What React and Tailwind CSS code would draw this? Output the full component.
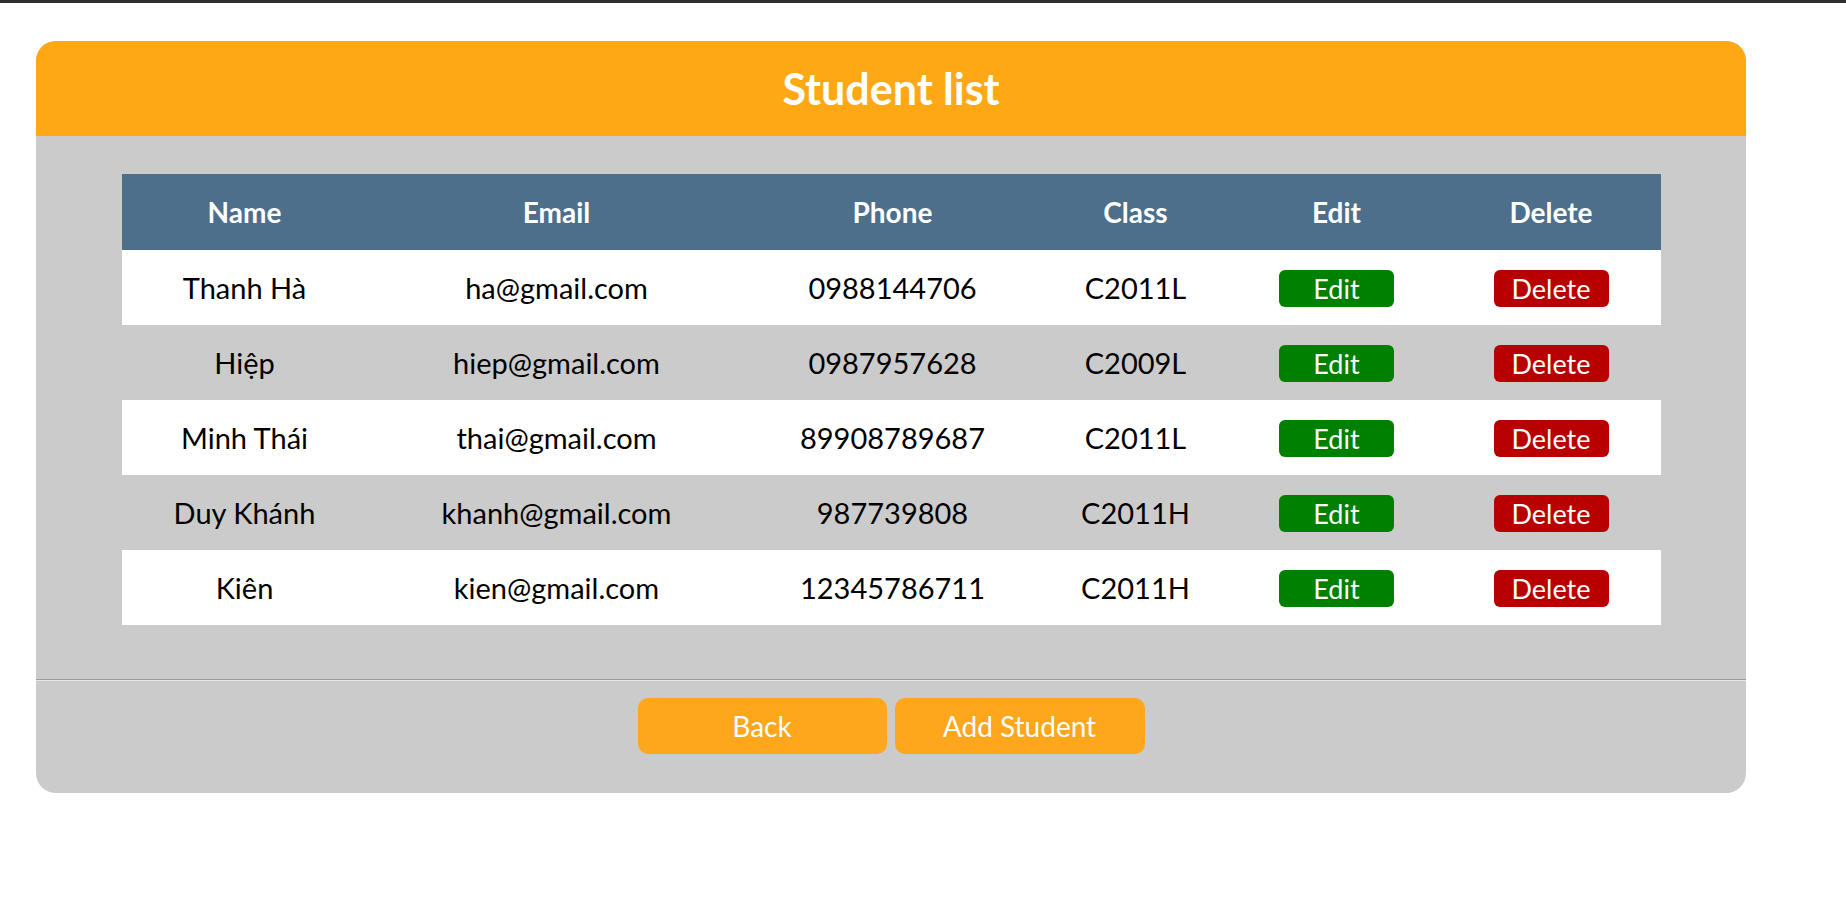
import React from 'react';

const students = [
  { name: 'Thanh Hà', email: 'ha@gmail.com', phone: '0988144706', cls: 'C2011L' },
  { name: 'Hiệp', email: 'hiep@gmail.com', phone: '0987957628', cls: 'C2009L' },
  { name: 'Minh Thái', email: 'thai@gmail.com', phone: '89908789687', cls: 'C2011L' },
  { name: 'Duy Khánh', email: 'khanh@gmail.com', phone: '987739808', cls: 'C2011H' },
  { name: 'Kiên', email: 'kien@gmail.com', phone: '12345786711', cls: 'C2011H' },
];

export default function App() {
  return (
    <div className="min-h-screen bg-white font-['Lato',sans-serif]">
      <div className="h-[3px] bg-[#2e2e2e]" />

      <div className="pt-[38px] pl-[36px]">
        <div className="w-[1710px] rounded-[20px] bg-[#cbcbcb]">
          {/* Header */}
          <div className="h-[95px] rounded-t-[20px] bg-[#fea815] flex items-center justify-center">
            <h1 className="text-[43px] font-bold text-white leading-none">Student list</h1>
          </div>

          {/* Table */}
          <div className="pt-[38px] pb-[54px]">
            <table className="w-[1539px] mx-auto table-fixed border-collapse text-[29px] text-black">
              <colgroup>
                <col className="w-[246px]" />
                <col className="w-[378px]" />
                <col className="w-[294px]" />
                <col className="w-[192px]" />
                <col className="w-[210px]" />
                <col className="w-[219px]" />
              </colgroup>
              <thead>
                <tr className="h-[76px] bg-[#4d6f8c] text-white font-bold text-[28px]">
                  <th>Name</th>
                  <th>Email</th>
                  <th>Phone</th>
                  <th>Class</th>
                  <th>Edit</th>
                  <th>Delete</th>
                </tr>
              </thead>
              <tbody>
                {students.map((s, i) => (
                  <tr key={i} className={i % 2 === 0 ? 'h-[75px] bg-white' : 'h-[75px] bg-[#cbcbcb]'}>
                    <td className="text-center">{s.name}</td>
                    <td className="text-center">{s.email}</td>
                    <td className="text-center">{s.phone}</td>
                    <td className="text-center">{s.cls}</td>
                    <td className="text-center">
                      <button className="w-[115px] h-[37px] rounded-[6px] bg-[#008000] text-white text-[27px] leading-none">
                        Edit
                      </button>
                    </td>
                    <td className="text-center">
                      <button className="w-[115px] h-[37px] rounded-[6px] bg-[#b90000] text-white text-[27px] leading-none">
                        Delete
                      </button>
                    </td>
                  </tr>
                ))}
              </tbody>
            </table>
          </div>

          {/* Footer */}
          <div className="border-t border-[#9c9c9c]" />
          <div className="border-t border-[#e6e6e6]" />
          <div className="flex justify-center gap-2 pt-[17px] pb-[39px]">
            <button className="w-[249px] h-[56px] rounded-[10px] bg-[#fea61c] text-white text-[28px]">
              Back
            </button>
            <button className="w-[250px] h-[56px] rounded-[10px] bg-[#fea61c] text-white text-[28px]">
              Add Student
            </button>
          </div>
        </div>
      </div>
    </div>
  );
}
